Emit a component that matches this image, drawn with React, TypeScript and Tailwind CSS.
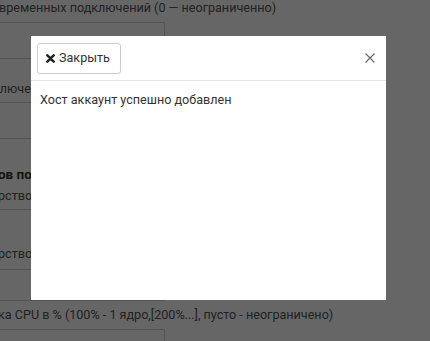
import React from "react";

const font = { fontFamily: "Roboto, 'Noto Sans', sans-serif" };

// page behind the dialog, mostly hidden
const BackgroundForm = () => (
  <div className="w-[430px] h-[341px] bg-white text-[12.6px] text-[#555] overflow-hidden" style={font}>
    <div className="h-[22px] -ml-[1px] leading-[16px] whitespace-nowrap">
      временных подключений (0 — неограниченно)
    </div>
    <div className="h-[37px] w-[165px] border border-l-0 border-[#cfcfcf]" />
    <div className="h-[43px] flex items-end pb-[3px] -ml-[7px] whitespace-nowrap">ключений</div>
    <div className="h-[37px] w-[165px] border border-l-0 border-[#cfcfcf]" />
    <div className="h-[70px] pt-[27px] -ml-[2px] whitespace-nowrap">
      <div className="font-bold text-[#333] text-[13.5px] leading-[16px]">ов по</div>
      <div className="mt-[6px] leading-[16px]">рство</div>
    </div>
    <div className="h-[60px] w-[165px] border-t border-r border-[#cfcfcf] flex items-end pb-[5px] -ml-[2px]">
      <span>рство</span>
    </div>
    <div className="h-[32px] w-[165px] border border-l-0 border-[#cfcfcf]" />
    <div className="h-[28px] flex items-center -ml-[2px] whitespace-nowrap">
      ка CPU в % (100% - 1 ядро,[200%...], пусто - неограничено)
    </div>
    <div className="h-[40px] w-[165px] border border-l-0 border-[#cfcfcf]" />
  </div>
);

export default function App() {
  return (
    <div className="relative w-[430px] h-[341px] overflow-hidden">
      <BackgroundForm />
      <div className="absolute inset-0 bg-black/60" />
      {/* dialog */}
      <div
        className="absolute left-[31px] top-[36px] w-[355px] h-[264px] bg-white flex flex-col"
        style={font}
      >
        <div className="h-[45px] border-b border-[#e5e5e5] flex items-center justify-between pl-[6px] pr-[11px]">
          <button className="h-[31px] w-[84px] border border-[#ccc] rounded-[3px] bg-white flex items-center pl-[8px] gap-[4px] text-[12.6px] text-[#333]">
            <svg width="9" height="9" viewBox="0 0 10 10">
              <path d="M1.5 1.5 L8.5 8.5 M8.5 1.5 L1.5 8.5" stroke="#222" strokeWidth="2.8" strokeLinecap="round" />
            </svg>
            <span>Закрыть</span>
          </button>
          <svg width="10" height="10" viewBox="0 0 10 10" className="mb-[1px]">
            <path d="M0.5 0.5 L9.5 9.5 M9.5 0.5 L0.5 9.5" stroke="#666" strokeWidth="1.1" />
          </svg>
        </div>
        <div className="px-[9px] pt-[11px] text-[12.6px] text-[#333] leading-[16px]">
          Хост аккаунт успешно добавлен
        </div>
      </div>
    </div>
  );
}
